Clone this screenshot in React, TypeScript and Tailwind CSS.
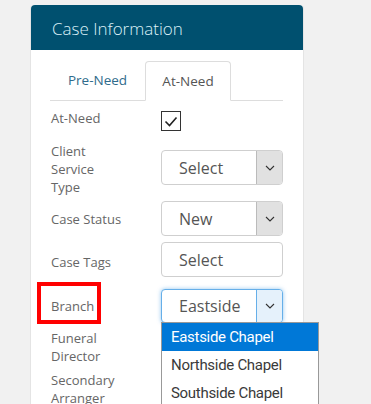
import React from "react";

const Chevron = () => (
  <svg width="10" height="6" viewBox="0 0 10 6" fill="none">
    <path d="M1 1l4 4 4-4" stroke="#333" strokeWidth="1.1" />
  </svg>
);

type SelectProps = { value: string; arrow?: boolean; active?: boolean };

function SelectBox({ value, arrow = true, active = false }: SelectProps) {
  return (
    <div
      className={`flex w-[122px] overflow-hidden rounded-[4px] border bg-white ${
        active ? "h-[34px] border-[#66afe9] shadow-[0_0_4px_rgba(102,175,233,0.7)]" : "h-[35px] border-[#cfcfcf]"
      }`}
    >
      <div className="flex flex-1 items-center pl-[17px] text-[16px] text-[#555]">{value}</div>
      {arrow && (
        <div
          className={`flex w-[26px] items-center justify-center border-l ${
            active ? "border-[#66afe9] bg-[#e5f1fb]" : "border-[#bbb] bg-[#e1e1e1]"
          }`}
        >
          <Chevron />
        </div>
      )}
    </div>
  );
}

export default function App() {
  const options = ["Eastside Chapel", "Northside Chapel", "Southside Chapel"];

  return (
    <div className="h-[404px] w-[371px] overflow-hidden bg-[#f1f1f1] pt-[5px] pl-[30px] font-['Open_Sans',sans-serif]">
      <div className="h-[420px] w-[274px] rounded-t-[4px] border-x border-[#e4e4e4] bg-white">
        {/* HEADER */}
        <div className="flex h-[45px] items-center rounded-t-[4px] bg-[#00506f] pl-[21px] pt-[2px] text-[17px] font-light text-[#dcf0f8]">
          Case Information
        </div>

        <div className="pl-[19px] pr-[20px] pt-[11px]">
          {/* TABS */}
          <div className="flex h-[40px] border-b border-[#ddd]">
            <div className="flex w-[95px] items-center justify-center text-[13.5px] text-[#2f6b8c]">Pre-Need</div>
            <div className="-mb-px flex w-[86px] items-center justify-center rounded-t-[4px] border border-b-white border-[#ddd] bg-white text-[13.5px] text-[#555]">
              At-Need
            </div>
          </div>

          {/* FIELDS */}
          <div className="relative pl-px text-[13px] leading-[18px] text-[#666]">
            <div className="mt-[10px] flex h-[20px] items-start">
              <div className="-mt-[2px] w-[110px]">At-Need</div>
              <div className="flex h-[20px] w-[20px] items-center justify-center border-[1.5px] border-[#333]">
                <svg width="14" height="11" viewBox="0 0 14 11" fill="none">
                  <path d="M1.5 5.5l4 4 7-8" stroke="#222" strokeWidth="1.6" />
                </svg>
              </div>
            </div>

            <div className="mt-[11px] flex h-[54px] items-start">
              <div className="w-[110px]">
                Client
                <br />
                Service
                <br />
                Type
              </div>
              <div className="mt-[8px]">
                <SelectBox value="Select" />
              </div>
            </div>

            <div className="mt-[5px] flex items-center">
              <div className="w-[110px]">Case Status</div>
              <SelectBox value="New" />
            </div>

            <div className="mt-[6px] flex items-center">
              <div className="w-[110px] pt-[5px]">Case Tags</div>
              <SelectBox value="Select" arrow={false} />
            </div>

            <div className="mt-[12px] flex items-center">
              <div className="relative w-[110px]">
                Branch
                <span className="absolute left-[-14px] top-[-15px] h-[42px] w-[64px] border-[4px] border-[#f00]" />
              </div>
              <div className="relative">
                <SelectBox value="Eastside" active />
                {/* DROPDOWN */}
                <div className="absolute left-0 top-[33px] z-10 w-[158px] border border-[#999] bg-white font-['Roboto',sans-serif] text-[15px] tracking-[-0.3px] text-[#3a3a3a]">
                  {options.map((o, i) => (
                    <div
                      key={o}
                      className={`flex h-[28px] items-center pl-[9px] ${i === 0 ? "bg-[#0078d7] text-white" : ""}`}
                    >
                      {o}
                    </div>
                  ))}
                </div>
              </div>
            </div>

            <div className="mt-[6px]">
              Funeral
              <br />
              Director
            </div>
            <div className="mt-[6px]">
              Secondary
              <br />
              Arranger
            </div>
          </div>
        </div>
      </div>
    </div>
  );
}
